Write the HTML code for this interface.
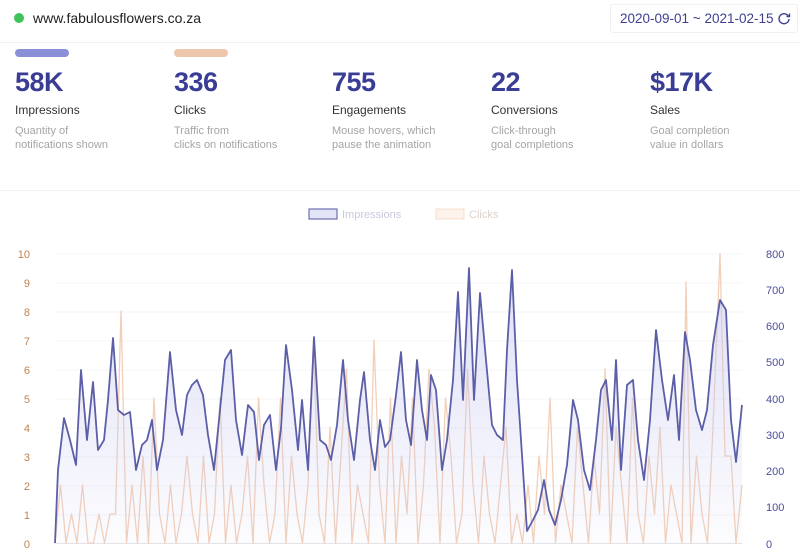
<!DOCTYPE html>
<html><head><meta charset="utf-8"><style>
*{margin:0;padding:0;box-sizing:border-box}
body{width:800px;height:558px;background:#fff;font-family:"Liberation Sans",sans-serif;position:relative;overflow:hidden}
.dot{position:absolute;left:14px;top:13px;width:10px;height:10px;border-radius:50%;background:#3fc45a}
.site{position:absolute;left:33px;top:10px;font-size:14px;color:#222}
.date{position:absolute;left:610px;top:4px;width:188px;height:29px;border:1px solid #eef0f5;border-radius:3px;font-size:13.5px;color:#3e4190;padding:6px 0 0 9px;white-space:nowrap}
.hr{position:absolute;left:0;width:800px;height:1px;background:#f1f1f3}
.col{position:absolute;top:49px}
.bar{width:54px;height:8px;border-radius:4px;margin-bottom:10px}
.num{font-size:27px;font-weight:bold;color:#3a3d95;letter-spacing:-0.5px;line-height:30px}
.lab{font-size:12px;color:#333;margin-top:6px}
.desc{font-size:11px;color:#a5a5a5;line-height:14px;margin-top:7px}
</style></head><body>
<div class="dot"></div><div class="site">www.fabulousflowers.co.za</div>
<div class="date">2020-09-01 ~ 2021-02-15</div>
<svg width="14" height="14" viewBox="0 0 14 14" style="position:absolute;left:777px;top:11px"><path d="M11.5 5.5A5 5 0 1 0 12 8" fill="none" stroke="#3e4190" stroke-width="1.4"/><path d="M9.5 5.5h3v-3" fill="none" stroke="#3e4190" stroke-width="1.4"/></svg>
<div class="hr" style="top:42px"></div>
<div class="col" style="left:15px"><div class="bar" style="background:#8b8fd8"></div><div class="num">58K</div><div class="lab">Impressions</div><div class="desc">Quantity of<br>notifications shown</div></div>
<div class="col" style="left:174px"><div class="bar" style="background:#eec6ab"></div><div class="num">336</div><div class="lab">Clicks</div><div class="desc">Traffic from<br>clicks on notifications</div></div>
<div class="col" style="left:332px"><div class="bar"></div><div class="num">755</div><div class="lab">Engagements</div><div class="desc">Mouse hovers, which<br>pause the animation</div></div>
<div class="col" style="left:491px"><div class="bar"></div><div class="num">22</div><div class="lab">Conversions</div><div class="desc">Click-through<br>goal completions</div></div>
<div class="col" style="left:650px"><div class="bar"></div><div class="num">$17K</div><div class="lab">Sales</div><div class="desc">Goal completion<br>value in dollars</div></div>
<div class="hr" style="top:190px"></div>
<svg width="800" height="558" style="position:absolute;left:0;top:0" font-family="Liberation Sans, sans-serif">
<defs><linearGradient id="g" x1="0" y1="0" x2="0" y2="1"><stop offset="0" stop-color="#c8caf0" stop-opacity=".6"/><stop offset="1" stop-color="#c8caf0" stop-opacity=".05"/></linearGradient></defs>
<rect x="309" y="209" width="28" height="10" fill="#e3e4f6" stroke="#6d70b0" stroke-width="1.2"/>
<text x="342" y="218" font-size="11" fill="#c9cae0">Impressions</text>
<rect x="436" y="209" width="28" height="10" fill="#fdf3ec" stroke="#f6dccb" stroke-width="1"/>
<text x="469" y="218" font-size="11" fill="#dcd2cc">Clicks</text>
<g stroke="#f4f4f6" stroke-width="1">
<line x1="55" y1="254" x2="742" y2="254"/><line x1="55" y1="283" x2="742" y2="283"/><line x1="55" y1="312" x2="742" y2="312"/><line x1="55" y1="341" x2="742" y2="341"/><line x1="55" y1="370" x2="742" y2="370"/><line x1="55" y1="399" x2="742" y2="399"/><line x1="55" y1="428" x2="742" y2="428"/><line x1="55" y1="457" x2="742" y2="457"/><line x1="55" y1="486" x2="742" y2="486"/><line x1="55" y1="515" x2="742" y2="515"/></g>
<line x1="55" y1="543.5" x2="742" y2="543.5" stroke="#e4e4e8"/>
<g font-size="11" fill="#c0824e" text-anchor="end">
<text x="30" y="258">10</text><text x="30" y="287">9</text><text x="30" y="316">8</text><text x="30" y="345">7</text><text x="30" y="374">6</text><text x="30" y="403">5</text><text x="30" y="432">4</text><text x="30" y="461">3</text><text x="30" y="490">2</text><text x="30" y="519">1</text><text x="30" y="548">0</text></g>
<g font-size="11" fill="#4a4d9a">
<text x="766" y="258">800</text><text x="766" y="294">700</text><text x="766" y="330">600</text><text x="766" y="366">500</text><text x="766" y="403">400</text><text x="766" y="439">300</text><text x="766" y="475">200</text><text x="766" y="511">100</text><text x="766" y="548">0</text></g>
<polyline fill="none" stroke="#f2cfb8" stroke-width="1.3" stroke-linejoin="round" points="55,543 60.5,485 66,543 71.5,514 77,543 82.5,485 88,543 93.5,543 99,514 104.5,543 110,514 115.5,514 121,311 126.5,543 132,485 137.5,543 143,456 148.5,543 154,398 159.5,514 165,543 170.5,485 176,543 181.5,514 187,456 192.5,514 198,543 203.5,456 209,543 214.5,514 220,398 225.5,543 231,485 236.5,543 242,514 247.5,456 253,543 258.5,398 264,485 269.5,543 275,514 280.5,398 286,543 291.5,456 297,514 302.5,543 308,485 313.5,340 319,514 324.5,543 330,427 335.5,543 341,456 346.5,369 352,543 357.5,485 363,514 368.5,543 374,340 379.5,485 385,543 390.5,398 396,543 401.5,456 407,514 412.5,398 418,543 423.5,485 429,369 434.5,427 440,543 445.5,398 451,456 456.5,543 462,514 467.5,369 473,485 478.5,543 484,456 489.5,514 495,543 500.5,485 506,427 511.5,543 517,514 522.5,543 528,485 533.5,543 539,456 544.5,514 550,398 555.5,543 561,485 566.5,514 572,543 577.5,427 583,485 588.5,543 594,456 599.5,514 605,369 610.5,543 616,427 621.5,485 627,543 632.5,398 638,514 643.5,543 649,456 654.5,514 660,427 665.5,543 671,485 676.5,514 682,543 686,282 691,543 696.5,456 702,514 707.5,543 713,427 720,254 725,456 731,456 736,543 742,485"/>
<polygon fill="url(#g)" stroke="none" points="55,543 58,470 64,418 70,440 76,465 81,370 87,440 93,382 98,450 104,440 108,400 113,338 118,410 124,415 130,412 136,470 142,445 147,440 152,420 157,470 163,440 170,352 176,410 182,435 187,395 192,385 197,380 203,395 208,435 214,470 219,420 225,360 231,350 236,420 242,455 248,405 254,412 259,460 264,425 270,415 276,470 281,428 286,345 292,390 298,450 302,400 308,470 314,337 320,440 326,445 331,460 337,425 343,360 348,420 354,460 360,400 364,372 370,440 375,470 380,420 385,447 390,440 396,395 401,352 406,420 411,445 417,360 422,410 427,440 431,375 436,390 442,470 447,440 453,380 458,292 463,400 469,268 474,400 480,293 486,360 492,425 497,435 503,440 507,350 512,270 517,380 522,455 527,531 533,520 538,510 544,480 549,510 555,525 561,500 567,465 573,400 578,420 584,470 590,490 596,440 601,390 606,380 612,440 616,360 621,470 627,385 633,380 638,440 644,480 650,420 656,330 662,380 668,420 674,375 679,440 685,332 690,360 696,410 702,430 707,410 713,345 720,300 726,310 731,420 736,462 742,405 742,543"/>
<polyline fill="none" stroke="#5c5fa8" stroke-width="1.8" stroke-linejoin="round" points="55,543 58,470 64,418 70,440 76,465 81,370 87,440 93,382 98,450 104,440 108,400 113,338 118,410 124,415 130,412 136,470 142,445 147,440 152,420 157,470 163,440 170,352 176,410 182,435 187,395 192,385 197,380 203,395 208,435 214,470 219,420 225,360 231,350 236,420 242,455 248,405 254,412 259,460 264,425 270,415 276,470 281,428 286,345 292,390 298,450 302,400 308,470 314,337 320,440 326,445 331,460 337,425 343,360 348,420 354,460 360,400 364,372 370,440 375,470 380,420 385,447 390,440 396,395 401,352 406,420 411,445 417,360 422,410 427,440 431,375 436,390 442,470 447,440 453,380 458,292 463,400 469,268 474,400 480,293 486,360 492,425 497,435 503,440 507,350 512,270 517,380 522,455 527,531 533,520 538,510 544,480 549,510 555,525 561,500 567,465 573,400 578,420 584,470 590,490 596,440 601,390 606,380 612,440 616,360 621,470 627,385 633,380 638,440 644,480 650,420 656,330 662,380 668,420 674,375 679,440 685,332 690,360 696,410 702,430 707,410 713,345 720,300 726,310 731,420 736,462 742,405"/>
</svg>
</body></html>
